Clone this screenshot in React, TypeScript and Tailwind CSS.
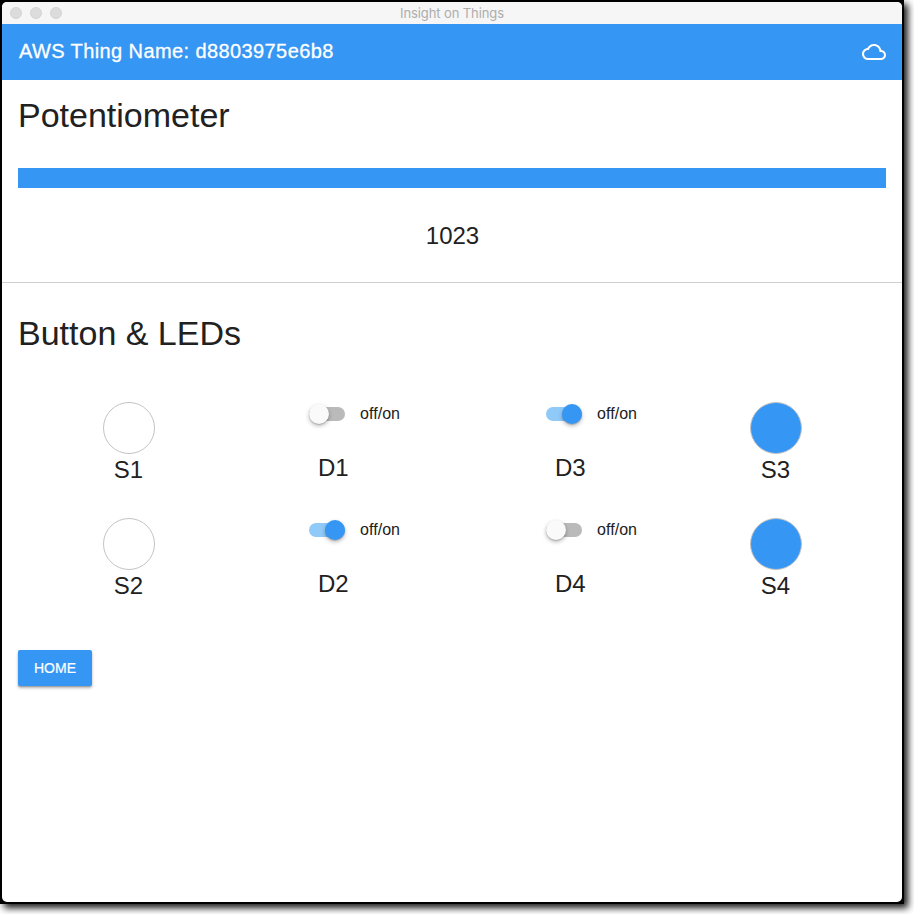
import React from "react";

const font = "font-['Helvetica','Liberation_Sans',Arial,sans-serif]";

function Lamp({ label, lit }: { label: string; lit?: boolean }) {
  return (
    <div className="flex w-[52px] flex-col items-center">
      <div
        className={`size-[52px] rounded-full border border-[#c4c4c4] ${lit ? "bg-[#3596f4]" : "bg-white"}`}
      />
      <div className="pr-px text-[24px] leading-8 whitespace-nowrap">{label}</div>
    </div>
  );
}

function Toggle({ label, on }: { label: string; on?: boolean }) {
  return (
    <div>
      <div className="flex h-6 items-center">
        <div
          className={`flex h-[14px] w-9 items-center rounded-full ${on ? "justify-end bg-[#90caf9]" : "bg-[#bababa]"}`}
        >
          <div
            className={`size-5 shrink-0 rounded-full shadow-[0_2px_4px_rgba(0,0,0,0.28),0_1px_1px_rgba(0,0,0,0.16)] ${on ? "bg-[#3596f4]" : "bg-[#fafafa]"}`}
          />
        </div>
        <span className="ml-[15px] text-[16px] leading-6 tracking-[0.05px] whitespace-nowrap">off/on</span>
      </div>
      <div className="mt-[26px] ml-[9px] text-[24px] leading-8">{label}</div>
    </div>
  );
}

export default function App() {
  return (
    <div className={`h-[914px] w-[914px] overflow-hidden bg-white text-[#212121] ${font}`}>
      <div className="h-[904px] w-[904px] bg-black p-[2px] shadow-[4px_4px_7px_rgba(0,0,0,0.9)]">
        <div className="flex h-full flex-col overflow-hidden rounded-[5px] bg-white">
          <div className="grid h-[22px] shrink-0 grid-cols-[1fr_auto_1fr] items-center bg-[#f6f6f6]">
            <div className="flex gap-2 pl-2">
              <span className="size-3 rounded-full border border-[#d3d3d3] bg-[#dcdcdc]" />
              <span className="size-3 rounded-full border border-[#d3d3d3] bg-[#dcdcdc]" />
              <span className="size-3 rounded-full border border-[#d3d3d3] bg-[#dcdcdc]" />
            </div>
            <span className="pb-px font-['Inter',sans-serif] text-[13px] leading-5 tracking-[-0.1px] text-[#adadad]">
              Insight on Things
            </span>
          </div>

          <header className="flex h-14 shrink-0 items-center justify-between bg-[#3596f4] px-4 text-white">
            <h1 className="pb-0.5 pl-px text-[20px] leading-7 tracking-[0.4px] [-webkit-text-stroke:0.3px_white]">
              AWS Thing Name: d8803975e6b8
            </h1>
            <svg width="24" height="24" viewBox="0 0 24 24" fill="white">
              <path d="M19.35 10.04C18.67 6.59 15.64 4 12 4 9.11 4 6.6 5.64 5.35 8.04 2.34 8.36 0 10.91 0 14c0 3.31 2.69 6 6 6h13c2.76 0 5-2.24 5-5 0-2.64-2.05-4.78-4.65-4.96zM19 18H6c-2.21 0-4-1.79-4-4s1.79-4 4-4h.71C7.37 7.69 9.48 6 12 6c3.04 0 5.5 2.46 5.5 5.5v.5H19c1.66 0 3 1.34 3 3s-1.34 3-3 3z" />
            </svg>
          </header>

          <section className="flex h-[203px] shrink-0 flex-col border-b border-[#cfcfcf] px-4">
            <h2 className="mt-[15px] text-[34px] leading-10">Potentiometer</h2>
            <div className="mt-[33px] h-5 bg-[#3596f4]" />
            <div className="mt-8 pl-px text-center text-[24px] leading-8">1023</div>
          </section>

          <section className="px-4 pt-[30px]">
            <h2 className="text-[34px] leading-10">Button &amp; LEDs</h2>
            <div className="mt-[49px] grid grid-cols-[206px_237px_204px_52px] gap-y-8 pl-[85px]">
              <Lamp label="S1" />
              <Toggle label="D1" />
              <Toggle label="D3" on />
              <Lamp label="S3" lit />
              <Lamp label="S2" />
              <Toggle label="D2" on />
              <Toggle label="D4" />
              <Lamp label="S4" lit />
            </div>
            <button className="mt-12 flex h-9 w-[74px] items-center justify-center rounded-[2px] bg-[#3596f4] text-[14px] text-white shadow-[0_2px_3px_rgba(0,0,0,0.3),0_1px_1px_rgba(0,0,0,0.14)] [-webkit-text-stroke:0.2px_white]">
              HOME
            </button>
          </section>
        </div>
      </div>
    </div>
  );
}
